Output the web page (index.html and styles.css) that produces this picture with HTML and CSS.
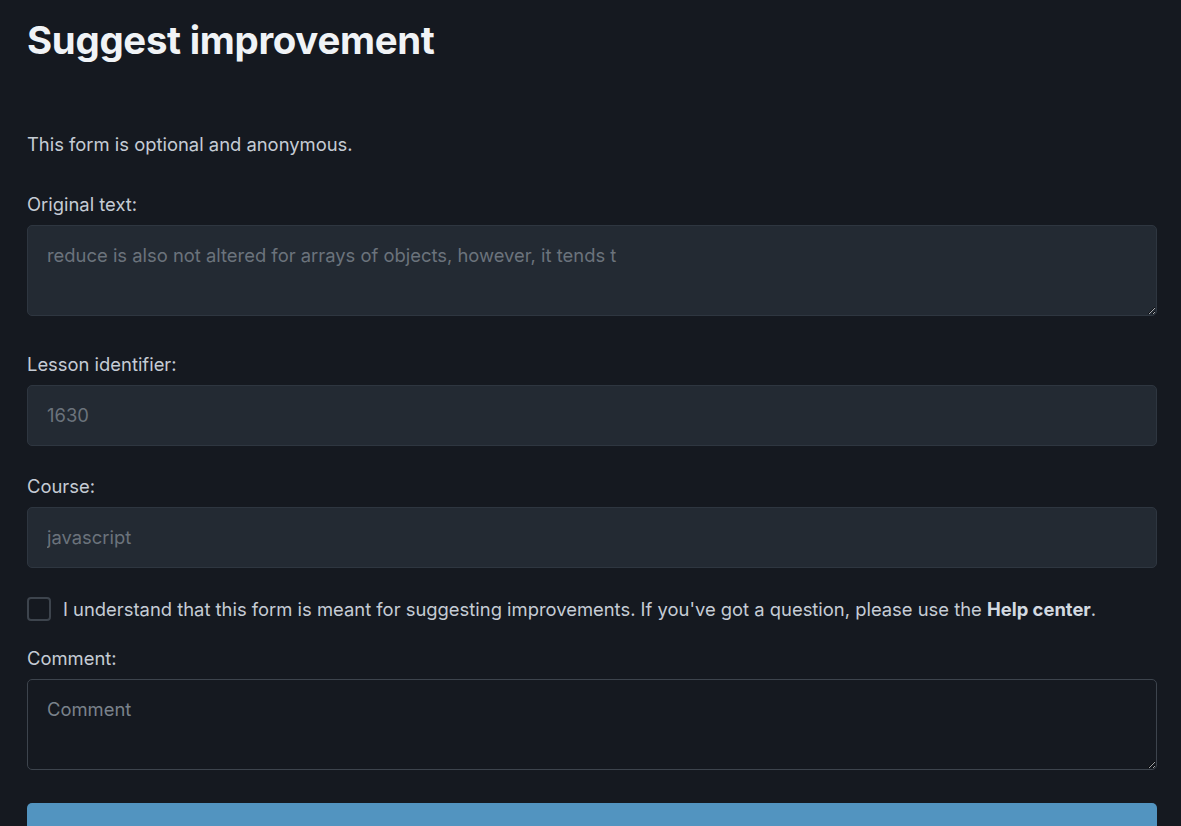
FILE: index.html
```html
<!DOCTYPE html>
<html lang="en">
<head>
<meta charset="utf-8">
<title>Suggest improvement</title>
<link rel="stylesheet" href="styles.css">
</head>
<body>
<main class="page">
  <h1 class="title">Suggest improvement</h1>
  <p class="intro">This form is optional and anonymous.</p>
  <form class="form">
    <div class="field">
      <label class="label" for="orig">Original text:</label>
      <textarea id="orig" class="control area" disabled placeholder="reduce is also not altered for arrays of objects, however, it tends t"></textarea>
    </div>
    <div class="field">
      <label class="label" for="lesson">Lesson identifier:</label>
      <input id="lesson" class="control input" disabled placeholder="1630">
    </div>
    <div class="field">
      <label class="label" for="course">Course:</label>
      <input id="course" class="control input" disabled placeholder="javascript">
    </div>
    <label class="check">
      <input type="checkbox" class="check-box">
      <span>I understand that this form is meant for suggesting improvements. If you've got a question, please use the <b>Help center</b>.</span>
    </label>
    <div class="field">
      <label class="label" for="comment">Comment:</label>
      <textarea id="comment" class="control area editable" placeholder="Comment"></textarea>
    </div>
    <button type="button" class="submit">Send</button>
  </form>
</main>
</body>
</html>
```
FILE: styles.css
```css
html, body {
  margin: 0;
  padding: 0;
  background: #151920;
}
body {
  font-family: Inter, "Noto Sans", sans-serif;
  color: #c9d1d9;
  color-scheme: dark;
}
.page {
  padding: 0 24px 0 27px;
}
.title {
  margin: 0;
  padding-top: 16px;
  font-size: 38.4px;
  line-height: 48px;
  font-weight: 700;
  color: #f0f3f6;
  letter-spacing: -0.3px;
}
.intro {
  margin: 0;
  padding-top: 67px;
  font-size: 18.4px;
  line-height: 26px;
  color: #c5ccd5;
}
.form {
  display: flex;
  flex-direction: column;
  padding-top: 34px;
}
.field {
  display: flex;
  flex-direction: column;
}
.label {
  font-size: 18.4px;
  line-height: 26px;
  color: #c5ccd5;
  margin-bottom: 8px;
}
.control {
  box-sizing: border-box;
  width: 100%;
  font-family: Inter, "Noto Sans", sans-serif;
  font-size: 18.4px;
  line-height: 26px;
  color: #c5ccd5;
  background: #232a33;
  border: 1px solid #2e3640;
  border-radius: 5px;
  padding: 17px 19px;
  margin: 0;
  outline: none;
}
.control::placeholder {
  color: #6b737c;
  opacity: 1;
}
.area {
  height: 91px;
  resize: vertical;
  padding-top: 16px;
  margin-bottom: 8px;
}
.input {
  height: 61px;
  padding-top: 16px;
}
.field + .field {
  margin-top: 27px;
}
.field + .check {
  margin-top: 28px;
}
.editable {
  background: #151920;
  border-color: #3d444d;
}
.editable::placeholder {
  color: #7a828b;
}
.check {
  display: flex;
  align-items: center;
  gap: 12px;
  font-size: 18.4px;
  line-height: 26px;
  color: #c5ccd5;
  margin-bottom: 23px;
}
.check b {
  font-weight: 700;
  color: #d3d9e0;
}
.check-box {
  appearance: none;
  -webkit-appearance: none;
  width: 24px;
  height: 24px;
  margin: 0;
  flex: none;
  border: 2px solid #3d444d;
  border-radius: 4px;
  background: transparent;
}
.submit {
  margin-top: 25px;
  height: 76px;
  border: 0;
  border-radius: 5px;
  background: #5294c0;
  color: #ffffff;
  font-family: Inter, "Noto Sans", sans-serif;
  font-size: 18px;
  font-weight: 600;
}
```
